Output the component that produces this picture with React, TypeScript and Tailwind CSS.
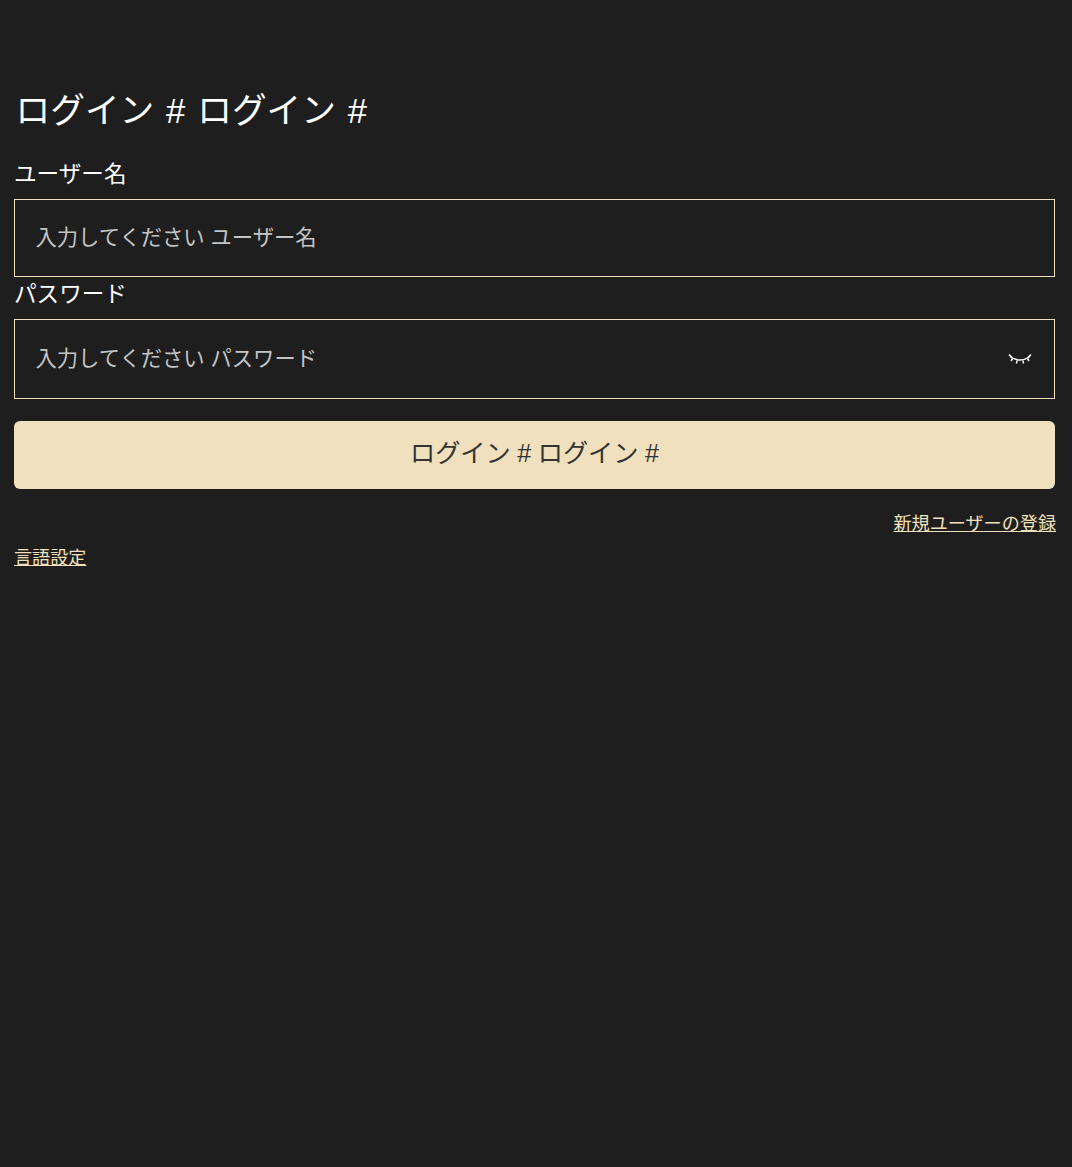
export default function App() {
  return (
    <div className="min-h-[1167px] bg-[#1e1e1e] px-[14px] pt-[88px] text-white" style={{ fontFamily: '"Liberation Sans","Noto Sans CJK JP",sans-serif' }}>
      <h1 className="ml-[1.5px] h-[46px] text-[34.7px] leading-[46px] font-normal [word-spacing:2.2px]">ログイン # ログイン #</h1>
      <div className="mt-[28px] h-[26px] text-[22.6px] leading-[26px]">ユーザー名</div>
      <div className="mt-[11px] flex h-[78px] w-[1041px] items-center border border-[#f0e0bd] pt-[2px] pr-[21px] pl-[20.5px]">
        <input readOnly placeholder="入力してください ユーザー名" className="w-full bg-transparent text-[21.3px] outline-none placeholder:text-[#c4c4c4]" />
      </div>
      <div className="mt-[5px] h-[26px] text-[22.6px] leading-[26px]">パスワード</div>
      <div className="mt-[11px] flex h-[80px] w-[1041px] items-center justify-between border border-[#f0e0bd] pt-[2px] pr-[22px] pl-[20.5px]">
        <input readOnly placeholder="入力してください パスワード" className="w-[800px] bg-transparent text-[21.3px] outline-none placeholder:text-[#c4c4c4]" />
        <svg className="-mt-[2px]" width="24" height="12" viewBox="0 0 24 12" fill="none" stroke="#fff" strokeWidth="1.5">
          <path d="M2 3.5Q12 10.5 22 3.5" />
          <path d="M1 1.5L4 4.5M23 1.5L20 4.5M4.5 5.5L3 8M9 7.5L8.5 10.5M15 7.5L15.5 10.5M19.5 5.5L21 8" />
        </svg>
      </div>
      <button className="mt-[22px] flex h-[68px] w-[1041px] items-center justify-center rounded-[6px] bg-[#f0e0bd] pb-[2px] text-[25.2px] text-[#333333] [word-spacing:-0.5px]">ログイン # ログイン #</button>
      <div className="mt-[23px] flex w-[1042px] justify-end">
        <a className="text-[18.1px] leading-[24px] text-[#f0e0bd] underline">新規ユーザーの登録</a>
      </div>
      <div className="mt-[10px]">
        <a className="text-[18.1px] leading-[24px] text-[#f0e0bd] underline">言語設定</a>
      </div>
    </div>
  );
}
